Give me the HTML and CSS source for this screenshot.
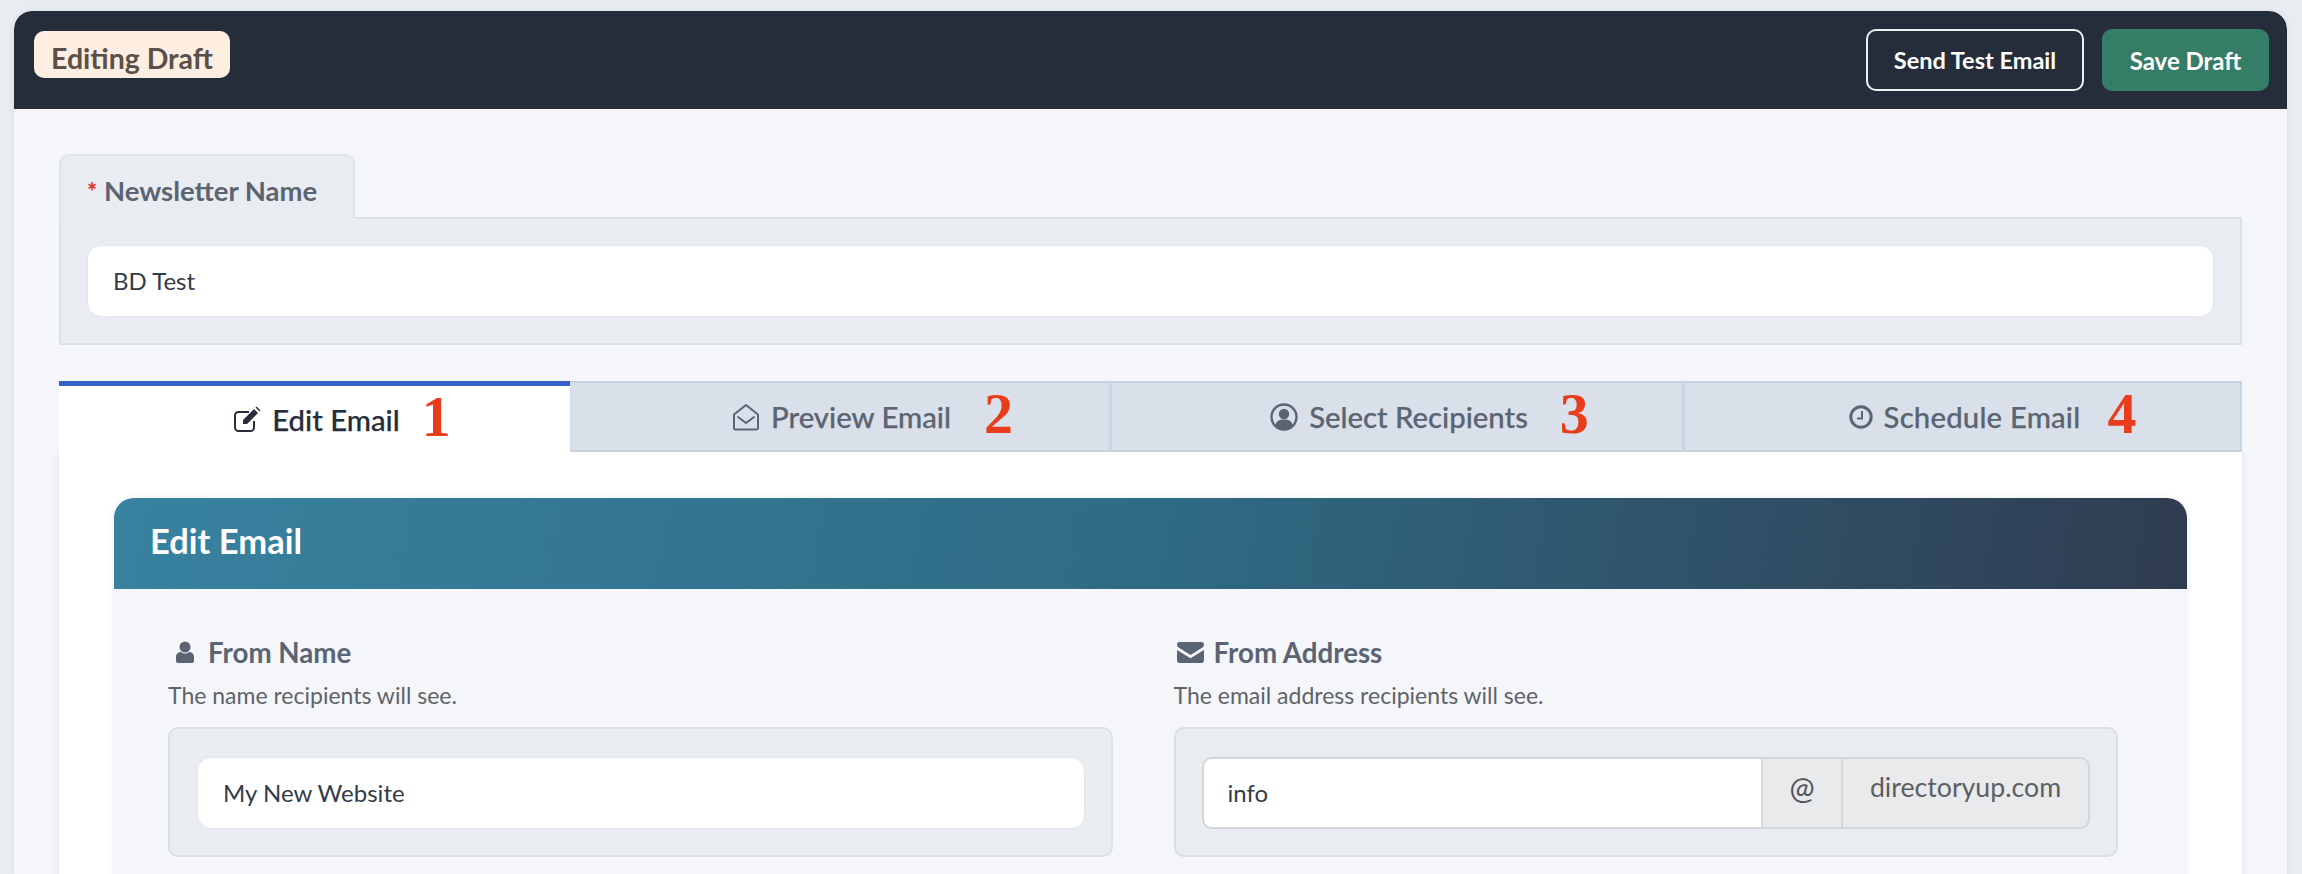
FILE: index.html
```html
<!DOCTYPE html>
<html lang="en">
<head>
<meta charset="utf-8">
<title>Editing Draft</title>
<link rel="stylesheet" href="styles.css">
</head>
<body>
<main class="card">
  <header class="topbar">
    <span class="badge">Editing Draft</span>
    <div class="actions">
      <button class="btn btn-outline">Send Test Email</button>
      <button class="btn btn-save">Save Draft</button>
    </div>
  </header>
  <div class="content">
    <section class="name-block">
      <div class="name-tab"><span class="req">*</span> Newsletter Name</div>
      <div class="name-panel"><div class="field field-lg">BD Test</div></div>
    </section>

    <nav class="tabs">
      <a class="tab active"><span class="tab-label">
        <svg class="tab-icon" viewBox="0 0 28 28"><path d="M21 16v6.500a3.500 3.500 0 0 1-3.500 3.500H5.500A3.500 3.500 0 0 1 2 22.500V10.500A3.500 3.500 0 0 1 5.500 7H16" fill="none" stroke="currentColor" stroke-width="2"/><path d="M10 15 21 4l4 4-11 11H10zM22.500 2.500l1-1 4 4-1 1z" fill="currentColor"/></svg>
        Edit Email<span class="num num1">1</span></span></a>
      <a class="tab"><span class="tab-label">
        <svg class="tab-icon" viewBox="0 0 28 28"><path d="M2 11.500 14 2l12 9.500V25a1.500 1.500 0 0 1-1.500 1.500h-21A1.500 1.500 0 0 1 2 25z" fill="none" stroke="currentColor" stroke-width="2" stroke-linejoin="round"/><path d="m6 14 8 6 8-6" fill="none" stroke="currentColor" stroke-width="2" stroke-linecap="round"/></svg>
        Preview Email<span class="num num2">2</span></span></a>
      <a class="tab"><span class="tab-label">
        <svg class="tab-icon" viewBox="0 0 28 28"><circle cx="14" cy="14" r="12.500" fill="none" stroke="currentColor" stroke-width="2.400"/><circle cx="14" cy="11" r="5.200" fill="currentColor"/><path d="M5 23c1-5 4-6.500 9-6.500s8 1.500 9 6.500a13 13 0 0 1-18 0z" fill="currentColor"/></svg>
        Select Recipients<span class="num num3">3</span></span></a>
      <a class="tab"><span class="tab-label">
        <svg class="tab-icon clock" viewBox="0 0 24 24"><circle cx="12" cy="12" r="10.200" fill="none" stroke="currentColor" stroke-width="3"/><path d="M13 6v7.500H8" fill="none" stroke="currentColor" stroke-width="2"/></svg>
        <span class="wide">Schedule Email</span><span class="num num4">4</span></span></a>
    </nav>

    <section class="tab-panel">
      <div class="edit-card">
        <h2 class="edit-title">Edit Email</h2>
        <div class="edit-body">
          <div class="group">
            <div class="group-label">
              <svg class="lbl-icon user" viewBox="0 0 20 22"><circle cx="10" cy="6" r="5.500" fill="currentColor"/><path d="M1 20v-4c0-3.500 2.500-5 5-5 1 1 2.500 1.500 4 1.500s3-.5 4-1.500c2.500 0 5 1.500 5 5v4a2 2 0 0 1-2 2H3a2 2 0 0 1-2-2z" fill="currentColor"/></svg>
              From Name
            </div>
            <p class="help">The name recipients will see.</p>
            <div class="box"><div class="field">My New Website</div></div>
          </div>
          <div class="group">
            <div class="group-label">
              <svg class="lbl-icon mail" viewBox="0 0 26 20"><path d="M0 2.500A2.500 2.500 0 0 1 2.500 0h21A2.500 2.500 0 0 1 26 2.500c0 1-.7 2-1.500 2.600L13 12.500 1.500 5.100C.7 4.500 0 3.500 0 2.500z" fill="currentColor"/><path d="M0 7.500 13 15.500 26 7.500v10a2.500 2.500 0 0 1-2.500 2.500h-21A2.500 2.500 0 0 1 0 17.500z" fill="currentColor"/></svg>
              From Address
            </div>
            <p class="help">The email address recipients will see.</p>
            <div class="box">
              <div class="input-group">
                <div class="ig-input">info</div>
                <div class="ig-addon ig-at">@</div>
                <div class="ig-addon ig-domain">directoryup.com</div>
              </div>
            </div>
          </div>
        </div>
      </div>
    </section>
  </div>
</main>
</body>
</html>
```
FILE: styles.css
```css
* { box-sizing: border-box; }
html, body { margin: 0; height: 874px; overflow: hidden; }
body {
  background: #e9ecf1;
  padding: 11px 15px 0 14px;
  font-family: "Lato", "Noto Sans", sans-serif;
  color: #252d3b;
}
.card {
  background: #f4f6fa;
  border-radius: 18px 18px 0 0;
  height: 863px;
  overflow: hidden;
  box-shadow: 0 0 6px rgba(60, 70, 90, .08);
}
.topbar {
  height: 98px;
  background: #252d3b;
  border-radius: 18px 18px 0 0;
  padding: 18px 18px 0 20px;
  display: flex;
  justify-content: space-between;
  align-items: flex-start;
}
.badge {
  margin-top: 2px;
  width: 196px;
  height: 47px;
  background: #feeee2;
  border-radius: 10px;
  color: #5a5049;
  font-size: 28.500px;
  font-weight: 700;
  line-height: 54px;
  text-align: center;
  overflow: hidden;
}
.actions { display: flex; gap: 18px; }
.btn {
  height: 62px;
  border-radius: 10px;
  font-family: inherit;
  font-size: 23.500px;
  font-weight: 700;
  color: #fff;
  padding: 0;
}
.btn-outline { width: 218px; background: transparent; border: 2px solid #eef0f4; }
.btn-save { width: 167px; background: #357d66; border: 0; font-size: 24px; }

.content { padding: 45px 45px 0; }
.name-tab {
  width: 296px;
  height: 65px;
  background: #e9ecf1;
  border: 2px solid #dfe5ec;
  border-bottom: 0;
  border-radius: 10px 10px 0 0;
  padding: 17px 0 0 26px;
  font-size: 27.500px;
  line-height: 36px;
  font-weight: 700;
  color: #5b6472;
  position: relative;
  z-index: 1;
  margin-bottom: -2px;
}
.req { color: #e8331c; font-size: 24px; }
.name-panel {
  background: #e9ecf1;
  border: 2px solid #d9e1ea;
  padding: 26px 26px 0;
  height: 128px;
}
.field {
  height: 72px;
  background: #fff;
  border: 1px solid #e3e7ec;
  border-radius: 14px;
  padding: 0 25px;
  line-height: 70px;
  font-size: 24px;
  color: #333b48;
}

.tabs {
  margin-top: 36px;
  height: 71px;
  display: grid;
  grid-template-columns: 511px 542px 573px 1fr;
  position: relative;
  z-index: 1;
}
.tab {
  background: #d9e0e9;
  border-top: 2px solid #c8d1dd;
  border-bottom: 2px solid #c8d1dd;
  border-right: 3px solid #c8d5e3;
  display: flex;
  justify-content: center;
  align-items: center;
  font-size: 29.300px;
  font-weight: 500;
  color: #5b6472;
  -webkit-text-stroke: .25px currentColor;
}
.tab:last-child { border-right: 2px solid #c8d5e3; }
.tab.active {
  background: #fff;
  border-top: 5px solid #3461c7;
  border-right: 0;
  border-bottom: 0;
  color: #252d3b;
}
.tab-label {
  position: relative;
  display: inline-flex;
  align-items: center;
  gap: 11px;
  margin-left: 4px;
}
.wide { letter-spacing: .2px; }
.tab-icon { width: 28px; height: 28px; }
.tab-icon.clock { width: 24px; height: 24px; }
.num {
  position: absolute;
  top: -15px;
  font-family: "Liberation Serif", serif;
  font-weight: 700;
  font-size: 58px;
  line-height: 60px;
  color: #e83c1a;
  -webkit-text-stroke: 0;
}
.num1 { left: calc(100% + 22px); }
.num2 { left: calc(100% + 33px); }
.num3 { left: calc(100% + 32px); }
.num4 { left: calc(100% + 27px); }

.tab-panel {
  background: #fff;
  padding: 46px 55px 0 55px;
  height: 500px;
  box-shadow: 0 0 8px rgba(60, 70, 90, .1);
}
.edit-card { box-shadow: 0 0 6px rgba(60, 70, 90, .1); background: #f4f6fa; border-radius: 20px 20px 0 0; height: 454px; }
.edit-title {
  margin: 0;
  height: 91px;
  padding-left: 36px;
  border-radius: 20px 20px 0 0;
  background: linear-gradient(100deg, #38829f 0%, #2f6b85 50%, #303c50 100%);
  color: #fff;
  font-size: 34.500px;
  font-weight: 700;
  line-height: 86px;
}
.edit-body {
  padding: 45px 69px 0 54px;
  display: grid;
  grid-template-columns: 1fr 1fr;
  column-gap: 61px;
}
.group-label {
  display: flex;
  align-items: center;
  height: 36px;
  font-size: 27.700px;
  font-weight: 700;
  color: #5b6472;
}
.lbl-icon { color: #5b6472; }
.lbl-icon.user { width: 20px; height: 22px; margin: 0 13px 0 7px; }
.lbl-icon.mail { width: 27px; height: 21px; margin: 0 10px 0 3px; }
.help {
  margin: 9px 0 16px;
  height: 32px;
  font-size: 23px;
  line-height: 32px;
  color: #5f6368;
}
.box {
  height: 130px;
  background: #e9ecf1;
  border: 2px solid #dcdfe5;
  border-radius: 10px;
  padding: 28px 26px;
}
.box .field { line-height: 69px; height: 72px; margin-left: 1px; }
.input-group {
  display: flex;
  height: 72px;
  border: 2px solid #d4d6d9;
  border-radius: 10px;
  overflow: hidden;
  font-size: 24px;
}
.ig-input { flex: 1; background: #fff; padding: 0 24px; line-height: 68px; color: #333b48; }
.ig-addon {
  background: #e9eaec;
  color: #5c5f63;
  border-left: 2px solid #d6d8da;
  line-height: 56px;
  text-align: center;
  font-size: 26.700px;
}
.ig-at { width: 80px; font-size: 30px; color: #50545a; }
.ig-domain { width: 247px; }
```
